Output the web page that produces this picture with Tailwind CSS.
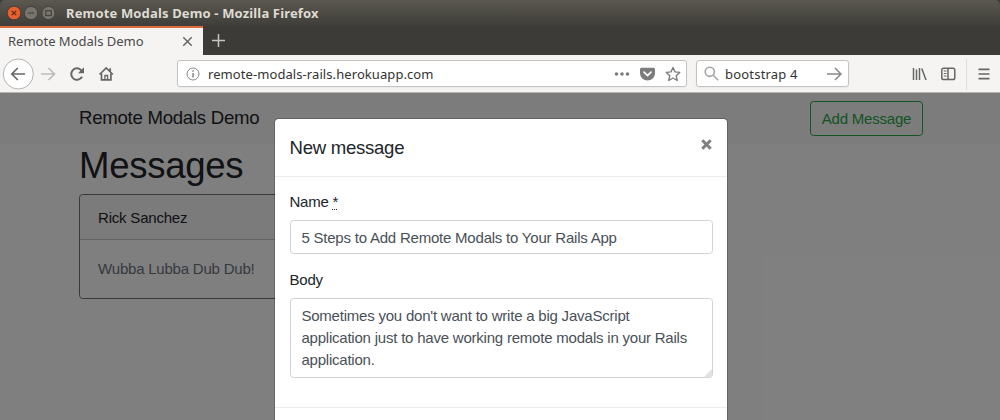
<!DOCTYPE html>
<html lang="en">
<head>
<meta charset="utf-8">
<title>Remote Modals Demo</title>
<script src="https://cdn.jsdelivr.net/npm/@tailwindcss/browser@4"></script>
</head>
<body class="w-[1000px] h-[420px] overflow-hidden flex flex-col bg-white font-['Liberation_Sans',sans-serif]">
  <header class="h-[93px] shrink-0 flex flex-col font-['Noto_Sans',sans-serif] text-[13px]">
    <div class="bg-[#3c3b37]">
      <div class="h-[26px] flex items-center pl-[7px] rounded-t-[5px] bg-linear-to-b from-[#5a584f] to-[#3f3e39]">
        <svg class="w-[50px] h-[16px] shrink-0" viewBox="0 0 50 16" fill="none">
          <circle cx="7" cy="8" r="6.8" fill="#e9602f" stroke="#35332e" stroke-width=".7"/>
          <path d="M4.8 5.8l4.4 4.4M9.2 5.8l-4.4 4.4" stroke="#5b2a17" stroke-width="1.2"/>
          <circle cx="24" cy="8" r="6.6" fill="#77756d" stroke="#35332e" stroke-width=".7"/>
          <path d="M20.8 8h6.4" stroke="#45443e" stroke-width="1.2"/>
          <circle cx="41.5" cy="8" r="6.6" fill="#77756d" stroke="#35332e" stroke-width=".7"/>
          <rect x="38.7" y="5.7" width="5.6" height="4.8" stroke="#45443e" stroke-width="1.2"/>
        </svg>
        <span class="ml-[9px] pt-px font-bold text-[#dfdbd2] text-[13px] tracking-[0.15px] whitespace-nowrap">Remote Modals Demo - Mozilla Firefox</span>
      </div>
    </div>
    <div class="h-[29px] flex bg-[#3c3b37]">
      <div class="w-[203px] h-[29px] border-t-2 border-[#df6a3c] bg-[#f5f4f3] flex items-center justify-between pl-[8px] pr-[10px] text-[#4a4a4a]">
        <span class="whitespace-nowrap">Remote Modals Demo</span>
        <svg class="size-[11px]" viewBox="0 0 11 11"><path d="M1.300 1.300l8.400 8.400M9.700 1.300L1.300 9.700" stroke="#666" stroke-width="1.500"/></svg>
      </div>
      <svg class="size-[13px] ml-[9px] mt-[8px]" viewBox="0 0 13 13"><path d="M6.500 0v13M0 6.500h13" stroke="#c5c4c0" stroke-width="1.500"/></svg>
    </div>
    <div class="h-[38px] flex items-center bg-[#f5f4f3] border-b border-[#b8b6b3]">
      <svg class="w-[177px] h-[36px] shrink-0" viewBox="0 0 177 36" fill="none" stroke="#666" stroke-width="1.7">
        <circle cx="18.300" cy="18" r="15" fill="#fff" stroke="#b4b3b1" stroke-width="1"/>
        <path d="M25 18H12M17.800 12l-6 6 6 6"/>
        <path d="M41 18h13M48.500 12l6 6-6 6" stroke="#bdbcba"/>
        <path d="M82 20.700a5.700 5.700 0 1 1-.6-6.200" stroke-width="2"/>
        <path d="M84 11.200v6h-6z" fill="#666" stroke="none"/>
        <path d="M99.500 18.500l6.700-6.500 6.700 6.500M101.500 17.500v6.400h9.400v-6.400M110.200 12.300v3"/>
        <path d="M104.900 24v-4.500h2.700V24" stroke-width="1.300"/>
      </svg>
      <div class="w-[510px] h-[27px] shrink-0 flex items-center rounded-[3px] border border-[#c4c3c1] bg-white shadow-xs pl-[8px] pr-[5px]">
        <svg class="size-[14px] shrink-0" viewBox="0 0 14 14" fill="none" stroke="#888"><circle cx="7" cy="7" r="6"/><path d="M7 6v4.500M7 3.300v1.500" stroke-width="1.500"/></svg>
        <span class="ml-[8px] text-[#333] tracking-[0.08px] relative top-px whitespace-nowrap">remote-modals-rails.herokuapp.com</span>
        <svg class="w-[68px] h-[18px] ml-auto shrink-0" viewBox="0 0 68 18" fill="#7c7c7c">
          <circle cx="3.500" cy="9" r="1.800"/><circle cx="9" cy="9" r="1.800"/><circle cx="14.500" cy="9" r="1.800"/>
          <path d="M28.500 2.800h12q1.500 0 1.500 1.500V8.500a7.500 7 0 0 1-15 0V4.300q0-1.500 1.500-1.500z"/>
          <path d="M31 7.200l3.500 3.400 3.500-3.400" stroke="#fff" stroke-width="1.700" fill="none" stroke-linecap="round"/>
          <path d="M60 2.500l2 4.400 4.700.5-3.500 3.300 1 4.800-4.200-2.500-4.200 2.500 1-4.800-3.500-3.300 4.700-.5z" fill="none" stroke="#7c7c7c" stroke-width="1.400" stroke-linejoin="round"/>
        </svg>
      </div>
      <div class="w-[153px] h-[27px] ml-[9px] shrink-0 flex items-center rounded-[3px] border border-[#c4c3c1] bg-white shadow-xs pl-[7px] pr-[6px]">
        <svg class="size-[15px] shrink-0" viewBox="0 0 15 15" fill="none" stroke="#a5a5a5" stroke-width="1.600"><circle cx="5.800" cy="5.800" r="4.600"/><path d="M9.200 9.200l5 5"/></svg>
        <span class="ml-[6px] text-[#333] tracking-[0.2px] relative top-px whitespace-nowrap">bootstrap 4</span>
        <svg class="w-[15px] h-[14px] ml-auto shrink-0" viewBox="0 0 15 14" fill="none" stroke="#888" stroke-width="1.500"><path d="M0 7h13.500M8 1l6 6-6 6"/></svg>
      </div>
      <svg class="w-[151px] h-[36px] shrink-0" viewBox="849 0 151 36" fill="none" stroke="#666" stroke-width="1.500">
        <path d="M913.500 12v12M916.500 13.500V24M919.500 12v12M921.800 12.500l4.200 11.500"/>
        <rect x="941.800" y="12.300" width="13" height="11.200" rx="1.800"/>
        <path d="M948 12.500v11"/><path d="M943.800 15h2.700M943.800 17.500h2.700M943.800 20h2.700" stroke-width="1"/>
        <path d="M966.500 3v31" stroke="#dcdbd9" stroke-width="1"/>
        <path d="M978.500 13.300h11M978.500 18h11M978.500 22.700h11" stroke-width="1.700"/>
      </svg>
    </div>
  </header>

  <div class="relative flex-1 overflow-hidden text-[15px] tracking-[-0.215px] leading-[21.7px] text-[#212529]">
    <nav class="h-[50.7px] bg-[#f8f9fa] flex items-center justify-between pl-[79px] pr-[77px]">
      <span class="text-[18.6px] tracking-[-0.26px]">Remote Modals Demo</span>
      <button class="h-[34.4px] w-[113px] pt-px border border-[#28a745] rounded-[3.6px] text-[#28a745]">Add Message</button>
    </nav>
    <main class="pl-[79px] pr-[77px]">
      <h1 class="text-[36.6px] tracking-[-0.3px] leading-[43.4px] mb-[7.2px]">Messages</h1>
      <div class="w-[267px] border border-[#6c757d] rounded-[3.600px]">
        <div class="px-[18.100px] pt-[11.400px] pb-[10.400px] bg-black/3 border-b border-black/20">Rick Sanchez</div>
        <div class="px-[18.100px] pt-[18.500px] pb-[17.700px] text-[#6c757d]">Wubba Lubba Dub Dub!</div>
      </div>
    </main>

    <div class="absolute inset-0 bg-black/50">
      <div class="w-[454px] ml-[274px] mt-[25px] h-[400px] bg-white bg-clip-padding border border-black/20 rounded-[4.5px]">
        <div class="flex items-start justify-between p-[14.5px] pb-[15px] border-b border-[#e9ecef]">
          <h5 class="text-[18.600px] tracking-[-0.28px] leading-[27.100px]">New message</h5>
          <button class="w-[12px] h-[22px] flex items-center" aria-label="Close">
            <svg class="size-[11px]" viewBox="0 0 11 11"><path d="M1.300 1.300l8.400 8.400M9.700 1.300L1.300 9.700" stroke="#7f7f7f" stroke-width="3"/></svg>
          </button>
        </div>
        <form class="p-[14.500px] pt-[14px]">
          <label class="block mb-[7.700px]">Name <abbr class="underline decoration-dotted decoration-1 underline-offset-2">*</abbr></label>
          <div class="h-[34.400px] mb-[14.500px] px-[10.900px] pt-[2px] flex items-center border border-[#ced4da] rounded-[3.600px] text-[#495057]">5 Steps to Add Remote Modals to Your Rails App</div>
          <label class="block mb-[7.200px]">Body</label>
          <div class="relative h-[80px] px-[10.900px] py-[6.500px] border border-[#ced4da] rounded-[3.600px] text-[#495057]">Sometimes you don't want to write a big JavaScript<br>application just to have working remote modals in your Rails<br>application.
            <svg class="absolute right-0 bottom-0 size-[8px]" viewBox="0 0 8 8"><path d="M8 0v8H0z" fill="#e2e2e2"/></svg>
          </div>
        </form>
        <div class="mt-[15px] border-t border-[#e9ecef]"></div>
      </div>
    </div>
  </div>
</body>
</html>
